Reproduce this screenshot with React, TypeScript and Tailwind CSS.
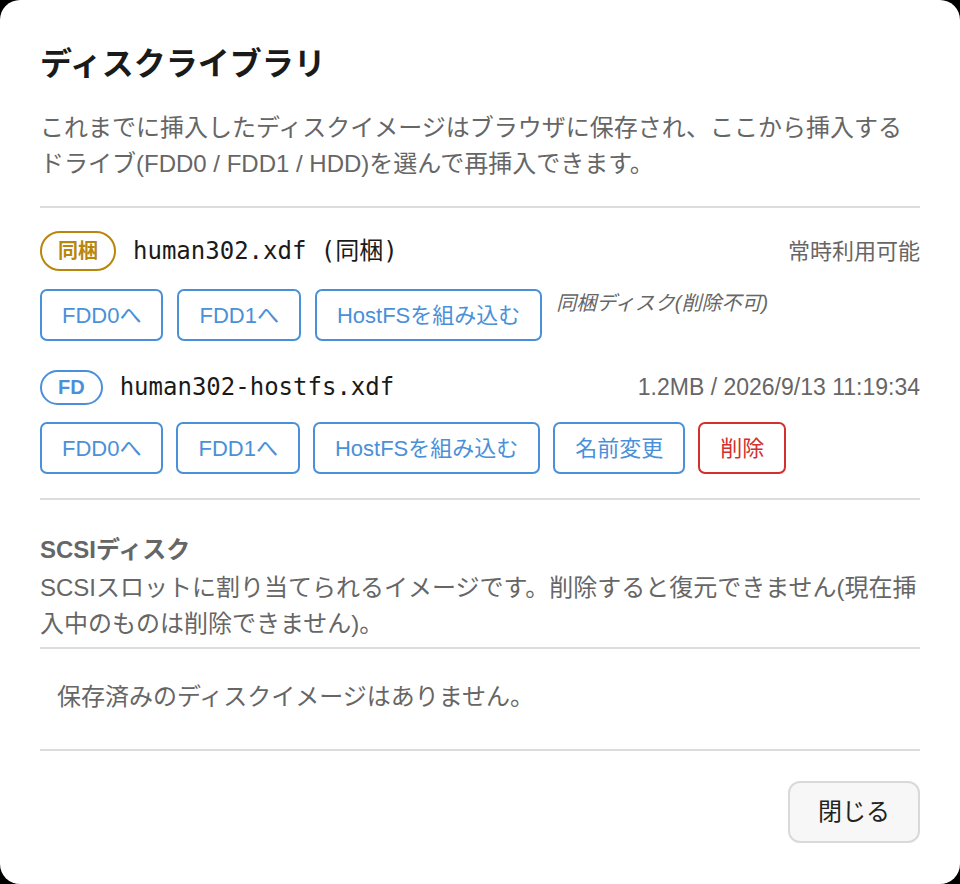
const sans = "font-['Liberation_Sans','Noto_Sans_CJK_JP',sans-serif]";
const mono = "font-['DejaVu_Sans_Mono','Noto_Sans_CJK_JP',monospace]";

type Btn = { label: string; danger?: boolean };

function ActionButton({ label, danger }: Btn) {
  return (
    <button
      className={
        danger
          ? "h-[52px] rounded-[7px] border-2 border-[#d32f2f] bg-white px-[20px] text-[22px] text-[#d32f2f]"
          : "h-[52px] rounded-[7px] border-2 border-[#4a90d9] bg-white px-[20px] text-[22px] text-[#4a90d9]"
      }
    >
      {label}
    </button>
  );
}

export default function App() {
  return (
    <div className={`min-h-screen bg-black ${sans}`}>
      <div className="flex h-[884px] w-[960px] flex-col rounded-[20px] bg-white px-10 pt-[44px]">
        <h1 className="text-[32px] font-bold leading-[40px] text-[#1a1a1a]">ディスクライブラリ</h1>
        <p className="mt-[26px] text-[24px] leading-[36px] text-[#666]">
          これまでに挿入したディスクイメージはブラウザに保存され、ここから挿入するドライブ(FDD0 / FDD1 / HDD)を選んで再挿入できます。
        </p>

        {/* floppy images */}
        <div className="mt-6 border-t-2 border-[#dcdcdc] pt-[23px]">
          <div className="flex h-10 items-center justify-between">
            <div className="flex items-center gap-[17px]">
              <span className="flex h-10 items-center rounded-full border-2 border-[#b8860b] px-[16px] text-[20px] font-bold text-[#b8860b]">
                同梱
              </span>
              <span className={`${mono} text-[24px] text-[#1a1a1a]`}>human302.xdf (同梱)</span>
            </div>
            <span className="text-[22px] text-[#666]">常時利用可能</span>
          </div>
          <div className="mt-[18px] flex items-start gap-[14px]">
            <ActionButton label="FDD0へ" />
            <ActionButton label="FDD1へ" />
            <ActionButton label="HostFSを組み込む" />
            <span className="text-[20px] italic leading-[28px] text-[#666]">同梱ディスク(削除不可)</span>
          </div>

          <div className="mt-[26px] flex h-10 items-center justify-between">
            <div className="flex items-center gap-[17px]">
              <span className="flex h-[35px] items-center rounded-full border-2 border-[#4a90d9] px-[16px] text-[20px] font-bold text-[#4a90d9]">
                FD
              </span>
              <span className={`${mono} text-[24px] text-[#1a1a1a]`}>human302-hostfs.xdf</span>
            </div>
            <span className="text-[23px] text-[#666]">1.2MB / 2026/9/13 11:19:34</span>
          </div>
          <div className="mt-[15px] flex items-start gap-[13px]">
            <ActionButton label="FDD0へ" />
            <ActionButton label="FDD1へ" />
            <ActionButton label="HostFSを組み込む" />
            <ActionButton label="名前変更" />
            <ActionButton label="削除" danger />
          </div>
        </div>

        {/* scsi images */}
        <div className="mt-6 border-t-2 border-[#dcdcdc] pt-[32px]">
          <h2 className="text-[24px] font-bold leading-[36px] text-[#666]">SCSIディスク</h2>
          <p className="mt-[2px] text-[24px] leading-[36px] text-[#666]">
            SCSIスロットに割り当てられるイメージです。削除すると復元できません(現在挿入中のものは削除できません)。
          </p>
        </div>
        <div className="mt-[5px] border-y-2 border-[#dcdcdc] pb-[34px] pl-[17px] pt-[30px]">
          <p className="text-[24px] leading-[36px] text-[#666]">保存済みのディスクイメージはありません。</p>
        </div>

        <div className="mt-[30px] flex justify-end">
          <button className="h-[62px] rounded-[12px] border-2 border-[#d9d9d9] bg-[#f7f7f7] px-[28px] text-[24px] text-[#222]">
            閉じる
          </button>
        </div>
      </div>
    </div>
  );
}
